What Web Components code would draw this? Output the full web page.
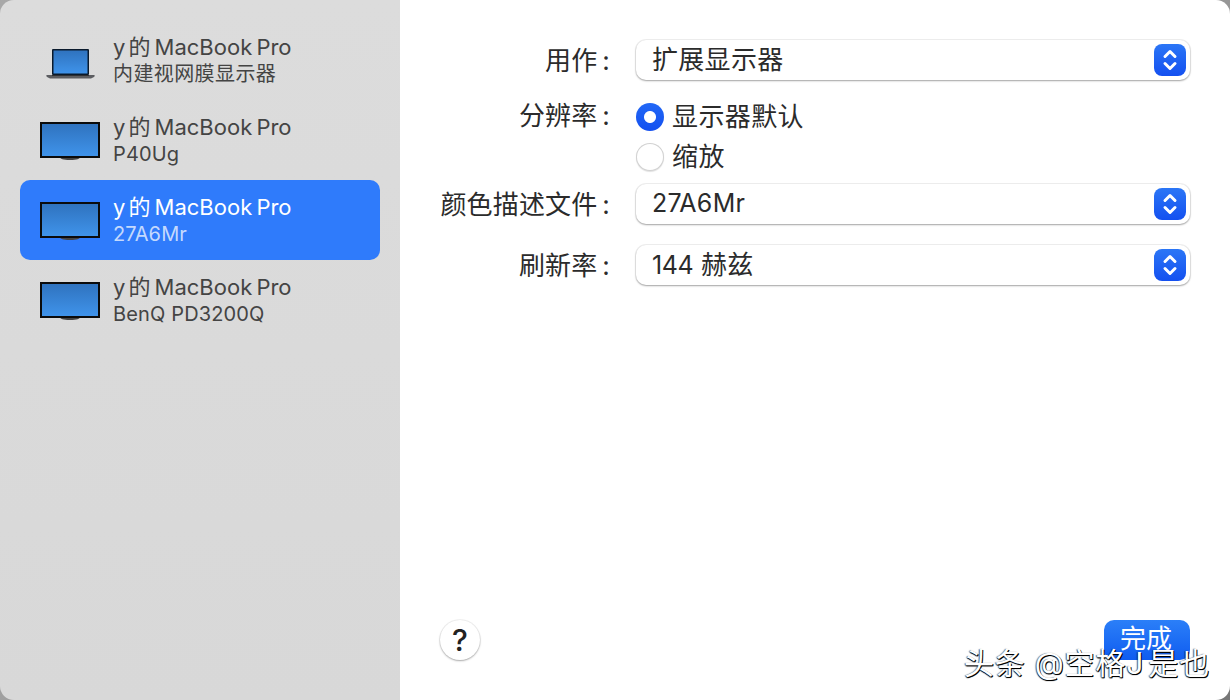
<!DOCTYPE html>
<html lang="zh">
<head>
<meta charset="utf-8">
<style>
  html, body { margin: 0; height: 100%; }
  body {
    width: 1230px;
    height: 700px;
    overflow: hidden;
    font-family: Inter, "Noto Sans CJK SC", sans-serif;
    background: linear-gradient(135deg, #a8a8a8, #9a9a9a 60%, #777);
  }
</style>
</head>
<body>
<settings-window>
  <display-list slot="side">
    <display-item name="y的 MacBook Pro" sub="内建视网膜显示器" kind="laptop" style="--sub-track: 0.4px"></display-item>
    <display-item name="y的 MacBook Pro" sub="P40Ug"></display-item>
    <display-item name="y的 MacBook Pro" sub="27A6Mr" selected></display-item>
    <display-item name="y的 MacBook Pro" sub="BenQ PD3200Q"></display-item>
  </display-list>

  <form-row label="用作" style="--row-top: 40px; --label-top: 1px">
    <popup-select>扩展显示器</popup-select>
  </form-row>
  <form-row label="分辨率" style="--row-top: 17px; --label-top: -1px">
    <radio-option checked>显示器默认</radio-option>
    <radio-option>缩放</radio-option>
  </form-row>
  <form-row label="颜色描述文件" style="--row-top: 7px; --label-top: 1px">
    <popup-select style="--value-top: -3px"><span style="font-size: 25px">27A6Mr</span></popup-select>
  </form-row>
  <form-row label="刷新率" style="--row-top: 21px; --label-top: 1px">
    <popup-select><span style="font-size: 25px; letter-spacing: -0.4px">144</span> 赫兹</popup-select>
  </form-row>

  <help-button slot="footer"></help-button>
  <done-button slot="footer">完成</done-button>
</settings-window>
<water-mark>头条 @空格<span style="letter-spacing: 5px">J</span>是也</water-mark>

<script>
const screenSvg = `
  <svg width="62" height="40" viewBox="0 0 62 40">
    <defs><linearGradient id="g" x1="0" y1="0" x2="0" y2="1">
      <stop offset="0" stop-color="#2f73bf"/><stop offset="1" stop-color="#3f93ea"/>
    </linearGradient></defs>
    <path d="M21 37h20c0 2-3 3-10 3s-10-1-10-3z" fill="#444"/>
    <rect x="1" y="2" width="60" height="36" fill="#0b0b0b"/>
    <rect x="3" y="4" width="56" height="32" fill="url(#g)"/>
  </svg>`;

const laptopSvg = `
  <svg width="62" height="40" viewBox="0 0 62 40">
    <defs><linearGradient id="l" x1="0" y1="0" x2="0" y2="1">
      <stop offset="0" stop-color="#2f73bf"/><stop offset="1" stop-color="#3f93ea"/>
    </linearGradient></defs>
    <rect x="13" y="9" width="37" height="26" rx="1" fill="#0a1a2c"/>
    <rect x="14.5" y="10.5" width="34" height="23" fill="url(#l)"/>
    <path d="M8 35h47c1 0 1 1 0 2l-3 1.500H11L8 37c-1-1-1-2 0-2z" fill="#5c5d61"/>
    <path d="M13 35h37v.8H13z" fill="#222"/>
  </svg>`;

class SettingsWindow extends HTMLElement {
  constructor() {
    super();
    this.attachShadow({ mode: "open" });
    this.shadowRoot.innerHTML = `
      <style>
        :host {
          display: flex;
          width: 1230px;
          height: 700px;
          border-radius: 14px;
          overflow: hidden;
        }
        .side {
          width: 400px;
          box-sizing: border-box;
          padding: 20px;
          background: linear-gradient(#dcdcdc, #d8d8d8);
        }
        .main {
          flex: 1;
          display: flex;
          flex-direction: column;
          box-sizing: border-box;
          padding: 0 40px 40px;
          background: #fff;
        }
        .rows { flex: 1; }
        .footer {
          display: flex;
          justify-content: space-between;
        }
      </style>
      <div class="side"><slot name="side"></slot></div>
      <div class="main">
        <div class="rows"><slot></slot></div>
        <div class="footer"><slot name="footer"></slot></div>
      </div>
    `;
  }
}

class DisplayList extends HTMLElement {
  constructor() {
    super();
    this.attachShadow({ mode: "open" });
    this.shadowRoot.innerHTML = `
      <style>:host { display: block; }</style>
      <slot></slot>
    `;
  }
}

class DisplayItem extends HTMLElement {
  constructor() {
    super();
    this.attachShadow({ mode: "open" });
  }

  connectedCallback() {
    const laptop = this.getAttribute("kind") === "laptop";
    const name = this.getAttribute("name").replace(/^y/, `<span class="y">y</span>`);
    this.shadowRoot.innerHTML = `
      <style>
        :host {
          display: flex;
          align-items: center;
          height: 80px;
          box-sizing: border-box;
          padding-left: 19px;
          border-radius: 10px;
          color: #444;
        }
        :host([selected]) {
          background: #2f7bfb;
          color: #fff;
        }
        svg { display: block; }
        .text { margin-left: 12px; }
        .name {
          font-size: 22px;
          line-height: 28px;
          word-spacing: -2px;
          margin-top: -1px;
        }
        .y { margin-right: 3px; }
        .sub {
          font-size: 20px;
          line-height: 26px;
          letter-spacing: var(--sub-track, 0.15px);
        }
        :host([selected]) .sub { color: #c4d9fd; }
      </style>
      ${laptop ? laptopSvg : screenSvg}
      <div class="text">
        <div class="name">${name}</div>
        <div class="sub">${this.getAttribute("sub")}</div>
      </div>
    `;
  }
}

class FormRow extends HTMLElement {
  constructor() {
    super();
    this.attachShadow({ mode: "open" });
  }

  connectedCallback() {
    this.shadowRoot.innerHTML = `
      <style>
        :host {
          display: grid;
          grid-template-columns: 170px 1fr;
          column-gap: 26px;
          margin-top: var(--row-top, 0);
          font-size: 26px;
          color: #2b2b2b;
        }
        .label {
          text-align: right;
          white-space: nowrap;
          height: 40px;
          line-height: 40px;
          margin-top: var(--label-top, 0px);
          margin-bottom: calc(-1 * var(--label-top, 0px));
          letter-spacing: 0.15px;
        }
        .label span { margin-left: 5px; }
      </style>
      <div class="label">${this.getAttribute("label")}<span>:</span></div>
      <div><slot></slot></div>
    `;
  }
}

class PopupSelect extends HTMLElement {
  constructor() {
    super();
    this.attachShadow({ mode: "open" });
    this.shadowRoot.innerHTML = `
      <style>
        :host {
          display: flex;
          align-items: center;
          justify-content: space-between;
          width: 554px;
          height: 40px;
          box-sizing: border-box;
          padding: 0 4px 0 16px;
          border-radius: 10px;
          background: #fff;
          box-shadow: 0 0 0 1px rgba(0,0,0,0.06), 0 1px 2px rgba(0,0,0,0.32);
          color: #2b2b2b;
          font-size: 26px;
        }
        .arrows {
          display: block;
          width: 32px;
          height: 32px;
          border-radius: 8px;
          background: linear-gradient(#2b76f6, #1450f0);
        }
        .value { margin-top: var(--value-top, -6px); letter-spacing: 0.3px; }
      </style>
      <span class="value"><slot></slot></span>
      <svg class="arrows" viewBox="0 0 32 32" fill="none" stroke="#fff" stroke-width="3" stroke-linecap="round" stroke-linejoin="round">
        <path d="M11 12.500l5-5 5 5M11 19.500l5 5 5-5"/>
      </svg>
    `;
  }
}

class RadioOption extends HTMLElement {
  constructor() {
    super();
    this.attachShadow({ mode: "open" });
    this.shadowRoot.innerHTML = `
      <style>
        :host {
          display: flex;
          align-items: center;
          height: 40px;
          color: #2b2b2b;
        }
        .dot {
          width: 28px;
          height: 28px;
          box-sizing: border-box;
          border-radius: 50%;
          margin-right: 8px;
          background: #fff;
          box-shadow: inset 0 0 0 1px rgba(0,0,0,0.18), 0 1px 1px rgba(0,0,0,0.12);
        }
        :host([checked]) .dot {
          background: radial-gradient(circle, #fff 0 5.5px, transparent 6.5px), linear-gradient(#2268f6, #1450f0);
          box-shadow: none;
        }
        .text { margin-top: -6px; letter-spacing: 0.4px; }
      </style>
      <span class="dot"></span><span class="text"><slot></slot></span>
    `;
  }
}

class HelpButton extends HTMLElement {
  constructor() {
    super();
    this.attachShadow({ mode: "open" });
    this.shadowRoot.innerHTML = `
      <style>
        :host {
          display: flex;
          align-items: center;
          justify-content: center;
          width: 40px;
          height: 40px;
          border-radius: 50%;
          background: #fff;
          box-shadow: 0 0 0 1px rgba(0,0,0,0.05), 0 1px 2px rgba(0,0,0,0.3);
          font: 500 30px Inter, sans-serif;
          color: #222;
        }
      </style>
      ?
    `;
  }
}

class DoneButton extends HTMLElement {
  constructor() {
    super();
    this.attachShadow({ mode: "open" });
    this.shadowRoot.innerHTML = `
      <style>
        :host {
          display: block;
          width: 86px;
          height: 40px;
          box-sizing: border-box;
          padding-right: 2px;
          border-radius: 10px;
          background: linear-gradient(#2b7ff8, #0f5cf0);
          color: #fff;
          font-size: 26px;
          line-height: 37px;
          text-align: center;
        }
      </style>
      <slot></slot>
    `;
  }
}

class WaterMark extends HTMLElement {
  constructor() {
    super();
    this.attachShadow({ mode: "open" });
    this.shadowRoot.innerHTML = `
      <style>
        :host {
          position: absolute;
          left: 964px;
          top: 643px;
          font-size: 30px;
          line-height: 40px;
          letter-spacing: 0.8px;
          white-space: nowrap;
          color: #fff;
          text-shadow: 1px 1px 0 #000, 0 1px 1px #000, -1px 0 1px rgba(0,0,0,0.5);
        }
      </style>
      <slot></slot>
    `;
  }
}

customElements.define("settings-window", SettingsWindow);
customElements.define("display-list", DisplayList);
customElements.define("display-item", DisplayItem);
customElements.define("form-row", FormRow);
customElements.define("popup-select", PopupSelect);
customElements.define("radio-option", RadioOption);
customElements.define("help-button", HelpButton);
customElements.define("done-button", DoneButton);
customElements.define("water-mark", WaterMark);
</script>
</body>
</html>
